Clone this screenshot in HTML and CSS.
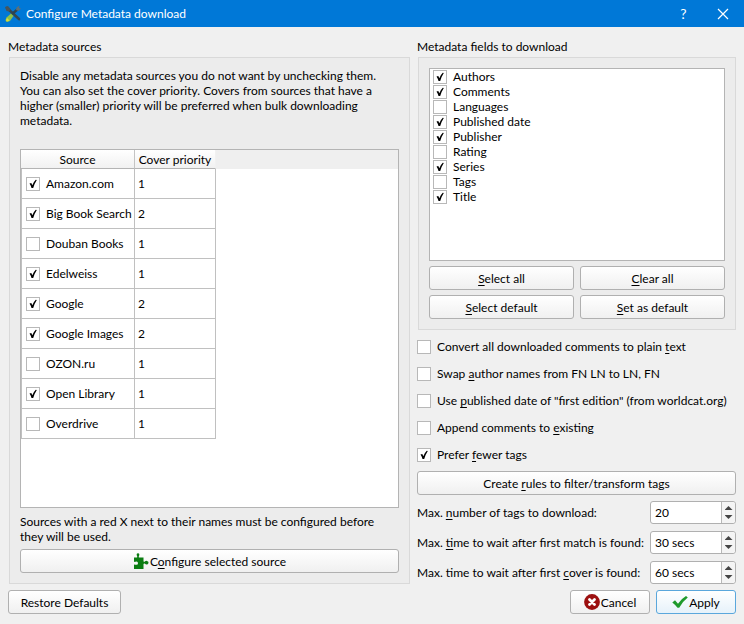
FILE: index.html
```html
<!DOCTYPE html>
<html lang="en">
<head>
  <meta charset="UTF-8" />
  <meta name="viewport" content="width=device-width, initial-scale=1.0" />
  <title>Configure Metadata download</title>
  <link rel="stylesheet" href="styles.css">
</head>
<body>
  <header class="titlebar">
    <svg class="app-icon" width="18" height="18" viewBox="0 0 18 18">
      <path d="M3 3l12 11" stroke="#34474f" stroke-width="2.600" stroke-linecap="round" />
      <path d="M1 2l3-1 2.500 3-1 2.500-3-.5z" fill="#46555c" />
      <path d="M14 4L8 9" stroke="#2d4450" stroke-width="2.400" stroke-linecap="round" />
      <path d="M12.500 2.500l3-2-.5 2.500 2 .5-2.500 2.500-2.500-1z" fill="#5c7078" />
      <path d="M7 8.500l2.500 2.500-3.500 5q-2 1.200-4 .5-.8-2 .5-4z" fill="#8cc04a" />
      <path d="M3 13l2.500 2.500-2 1q-1.500 0-1.500-1.500z" fill="#d8dc3c" />
    </svg>
    <h1>Configure Metadata download</h1>
    <button class="title-btn" type="button" aria-label="Help">?</button>
    <button class="title-btn" type="button" aria-label="Close">
      <svg width="12" height="12" viewBox="0 0 12 12"><path d="M1 1l10 10M11 1L1 11" stroke="#fff" stroke-width="1.2" /></svg>
    </button>
  </header>

  <main class="columns">
    <section class="left">
      <h2>Metadata sources</h2>
      <div class="group sources">
        <p class="intro">Disable any metadata sources you do not want by unchecking them. You can also set the cover priority. Covers from sources that have a higher (smaller) priority will be preferred when bulk downloading metadata.</p>
        <div class="table-frame">
          <table>
            <thead>
              <tr><th class="col-source">Source</th><th class="col-priority">Cover priority</th><td class="rest"></td></tr>
            </thead>
            <tbody>
              <tr><td><label class="check"><input type="checkbox" checked>Amazon.com</label></td><td>1</td></tr>
              <tr><td><label class="check"><input type="checkbox" checked>Big Book Search</label></td><td>2</td></tr>
              <tr><td><label class="check"><input type="checkbox">Douban Books</label></td><td>1</td></tr>
              <tr><td><label class="check"><input type="checkbox" checked>Edelweiss</label></td><td>1</td></tr>
              <tr><td><label class="check"><input type="checkbox" checked>Google</label></td><td>2</td></tr>
              <tr><td><label class="check"><input type="checkbox" checked>Google Images</label></td><td>2</td></tr>
              <tr><td><label class="check"><input type="checkbox">OZON.ru</label></td><td>1</td></tr>
              <tr><td><label class="check"><input type="checkbox" checked>Open Library</label></td><td>1</td></tr>
              <tr><td><label class="check"><input type="checkbox">Overdrive</label></td><td>1</td></tr>
            </tbody>
          </table>
        </div>
        <p class="hint">Sources with a red X next to their names must be configured before they will be used.</p>
        <button class="btn" type="button">
          <svg width="16" height="16" viewBox="0 0 16 16">
            <path fill="#0b7d12" d="M1 4.500h3q.6-.6.100-1.300Q2.900.3 5 .3T5.900 3.200q-.5.700.1 1.300H10.500v3.700q.4.800 1.200.5 1-1.200 2.300-.8Q15.900 8.500 15.500 10T13.500 11.500q-.8 0-1.800-1-.8-.2-1.200.5V16H1v-4.200q.5-.6 1.300-.1 2.700.7 2.700-1.500T2.300 8.700Q1.500 9.200 1 8.500z" />
          </svg><span>C<u>o</u>nfigure selected source</span>
        </button>
      </div>
    </section>

    <section class="right">
      <h2>Metadata fields to download</h2>
      <div class="group">
        <div class="fields">
          <label class="check"><input type="checkbox" checked>Authors</label>
          <label class="check"><input type="checkbox" checked>Comments</label>
          <label class="check"><input type="checkbox">Languages</label>
          <label class="check"><input type="checkbox" checked>Published date</label>
          <label class="check"><input type="checkbox" checked>Publisher</label>
          <label class="check"><input type="checkbox">Rating</label>
          <label class="check"><input type="checkbox" checked>Series</label>
          <label class="check"><input type="checkbox">Tags</label>
          <label class="check"><input type="checkbox" checked>Title</label>
        </div>
        <div class="btn-grid">
          <button class="btn" type="button"><span><u>S</u>elect all</span></button>
          <button class="btn" type="button"><span><u>C</u>lear all</span></button>
          <button class="btn" type="button"><span><u>S</u>elect default</span></button>
          <button class="btn" type="button"><span><u>S</u>et as default</span></button>
        </div>
      </div>

      <div class="options">
        <label class="check"><input type="checkbox"><span>Convert all downloaded comments to plain <u>t</u>ext</span></label>
        <label class="check"><input type="checkbox"><span>Swap <u>a</u>uthor names from FN LN to LN, FN</span></label>
        <label class="check"><input type="checkbox"><span>Use <u>p</u>ublished date of "first edition" (from worldcat.org)</span></label>
        <label class="check"><input type="checkbox"><span>Append comments to <u>e</u>xisting</span></label>
        <label class="check"><input type="checkbox" checked><span>Prefer <u>f</u>ewer tags</span></label>
      </div>

      <button class="btn" type="button"><span>Create <u>r</u>ules to filter/transform tags</span></button>

      <div class="limits">
        <label for="maxTags">Max. <u>n</u>umber of tags to download:</label>
        <div class="spin">
          <input id="maxTags" type="text" value="20">
          <div class="arrows"><button class="up" type="button" aria-label="More"></button><button class="down" type="button" aria-label="Less"></button></div>
        </div>
        <label for="matchWait">Max. <u>t</u>ime to wait after first match is found:</label>
        <div class="spin">
          <input id="matchWait" type="text" value="30 secs">
          <div class="arrows"><button class="up" type="button" aria-label="More"></button><button class="down" type="button" aria-label="Less"></button></div>
        </div>
        <label for="coverWait">Max. time to wait after first <u>c</u>over is found:</label>
        <div class="spin">
          <input id="coverWait" type="text" value="60 secs">
          <div class="arrows"><button class="up" type="button" aria-label="More"></button><button class="down" type="button" aria-label="Less"></button></div>
        </div>
      </div>
    </section>
  </main>

  <footer class="footer">
    <button class="btn restore" type="button">Restore Defaults</button>
    <button class="btn cancel" type="button">
      <svg width="16" height="16" viewBox="0 0 16 16"><circle cx="8" cy="8" r="7.900" fill="#9c1010" /><path d="M5.500 5.500l5 5M10.500 5.500l-5 5" stroke="#fff" stroke-width="2.800" stroke-linecap="round" /></svg><span>Cancel</span>
    </button>
    <button class="btn apply" type="button">
      <svg width="16" height="16" viewBox="0 0 16 16"><path d="M.3 8.500L3 6.200l3 3.600Q9.500 4.500 14 2l1.800 1.500Q10.500 7.500 7.200 13.800H5.500Q3.500 11 .3 8.500z" fill="#1f9a2c" /></svg><span>Apply</span>
    </button>
  </footer>
</body>
</html>
```
FILE: styles.css
```css
* {
  box-sizing: border-box;
}
body {
  margin: 0;
  min-height: 100vh;
  display: flex;
  flex-direction: column;
  background-color: #f0f0f0;
  color: #000;
  font-family: Lato, "Open Sans", sans-serif;
  font-size: 12px;
  line-height: 15px;
}
h1, h2, p {
  margin: 0;
  font-size: 12px;
  font-weight: normal;
}
button, input {
  font: inherit;
  color: inherit;
}
u {
  text-underline-offset: 2px;
  text-decoration-skip-ink: none;
}

/* title bar */
.titlebar {
  display: flex;
  align-items: center;
  height: 27px;
  padding: 0 4px;
  background-color: #0078d7;
  color: #fff;
}
.titlebar h1 {
  flex: 1;
  margin-left: 4px;
}
.title-btn {
  display: flex;
  align-items: center;
  justify-content: center;
  width: 45px;
  height: 22px;
  padding: 0;
  border: none;
  background: none;
  font-size: 14px;
}
.title-btn:last-child {
  width: 34px;
}

/* columns */
.columns {
  flex: 1;
  display: grid;
  grid-template-columns: 402fr 319fr;
  gap: 7px;
  padding: 12px 8px 6px;
}
.left, .right {
  display: flex;
  flex-direction: column;
  min-width: 0;
}
h2 {
  margin-bottom: 3px;
}
.group {
  margin-left: 1px;
  padding: 10px;
  border: 1px solid #d9d9d9;
  background-color: #ececec;
}
.sources {
  flex: 1;
  display: flex;
  flex-direction: column;
}
.intro {
  margin-bottom: 21px;
  padding-right: 10px;
}
.hint {
  margin: 6px 0 5px;
}

/* source table */
.table-frame {
  flex: 1;
  border: 1px solid #b4b4b4;
  background-color: #fff;
}
table {
  width: 100%;
  border-collapse: separate;
  border-spacing: 0;
  table-layout: fixed;
}
th {
  height: 19px;
  padding: 0;
  border-right: 1px solid #c4c4c4;
  border-bottom: 1px solid #b4b4b4;
  background: linear-gradient(#fff, #f1f1f1);
  font-weight: normal;
}
.col-source {
  width: 114px;
}
.col-priority {
  width: 81px;
  border-right-color: #f1f1f1;
}
.rest {
  background-color: #efefef;
}
tbody td {
  height: 30px;
  padding: 0 3px;
  border-right: 1px solid #c0c0c0;
  border-bottom: 1px solid #c0c0c0;
}
tbody td:first-child {
  padding: 0 0 0 4px;
  border-left: 1px solid #c0c0c0;
}

/* check boxes */
.check {
  display: flex;
  align-items: center;
  gap: 6px;
  white-space: nowrap;
}
.check input {
  appearance: none;
  flex: none;
  width: 14px;
  height: 14px;
  margin: 0;
  border: 1px solid #b8b8b8;
  background-color: #fff;
}
.check input:checked {
  background-image: url("data:image/svg+xml,%3Csvg xmlns='http://www.w3.org/2000/svg' viewBox='0 0 12 12'%3E%3Cpath d='M2.500 5.500L4.300 5 5.300 7.200Q6.800 3.500 8.800 1.700L9.800 2Q7.500 5.500 6.200 10H4.500Q3.700 7.300 2.500 5.500z'/%3E%3C/svg%3E");
}
.fields {
  height: 193px;
  padding: 0 3px;
  border: 1px solid #b4b4b4;
  background-color: #fff;
}
.options {
  display: flex;
  flex-direction: column;
  gap: 12px;
  margin: 9px 0;
}

/* buttons */
.btn {
  display: flex;
  align-items: center;
  justify-content: center;
  gap: 1px;
  height: 24px;
  padding: 0 10px;
  border: 1px solid #b0b0b0;
  border-radius: 3px;
  background: linear-gradient(#fff, #f0f0f0);
  white-space: nowrap;
}
.btn-grid {
  display: grid;
  grid-template-columns: 1fr 1fr;
  gap: 5px 6px;
  margin-top: 5px;
}

/* spin boxes */
.limits {
  display: grid;
  grid-template-columns: 1fr 86px;
  align-items: center;
  gap: 7px 5px;
  margin-top: 6px;
  white-space: nowrap;
}
.spin {
  display: flex;
  height: 23px;
  border: 1px solid #b0b0b0;
  border-radius: 3px;
  background-color: #fff;
}
.spin input {
  flex: 1;
  min-width: 0;
  padding: 0 4px;
  border: none;
  background: none;
}
.arrows {
  display: flex;
  flex-direction: column;
  align-items: center;
  justify-content: center;
  gap: 5px;
  width: 14px;
  border-left: 1px solid #b8b8b8;
  border-radius: 0 3px 3px 0;
  background-color: #f4f4f4;
}
.arrows button {
  width: 8px;
  height: 4px;
  padding: 0;
  border: none;
  background-color: #444;
}
.up {
  clip-path: polygon(50% 0, 100% 100%, 0 100%);
}
.down {
  clip-path: polygon(0 0, 100% 0, 50% 100%);
}

/* dialog buttons */
.footer {
  display: flex;
  gap: 6px;
  padding: 0 8px 10px;
}
.restore {
  width: 113px;
  margin-right: auto;
}
.cancel, .apply {
  width: 80px;
}
.apply {
  border-color: #5aa7dc;
  background: linear-gradient(#fff, #e6f2fa);
}
```
